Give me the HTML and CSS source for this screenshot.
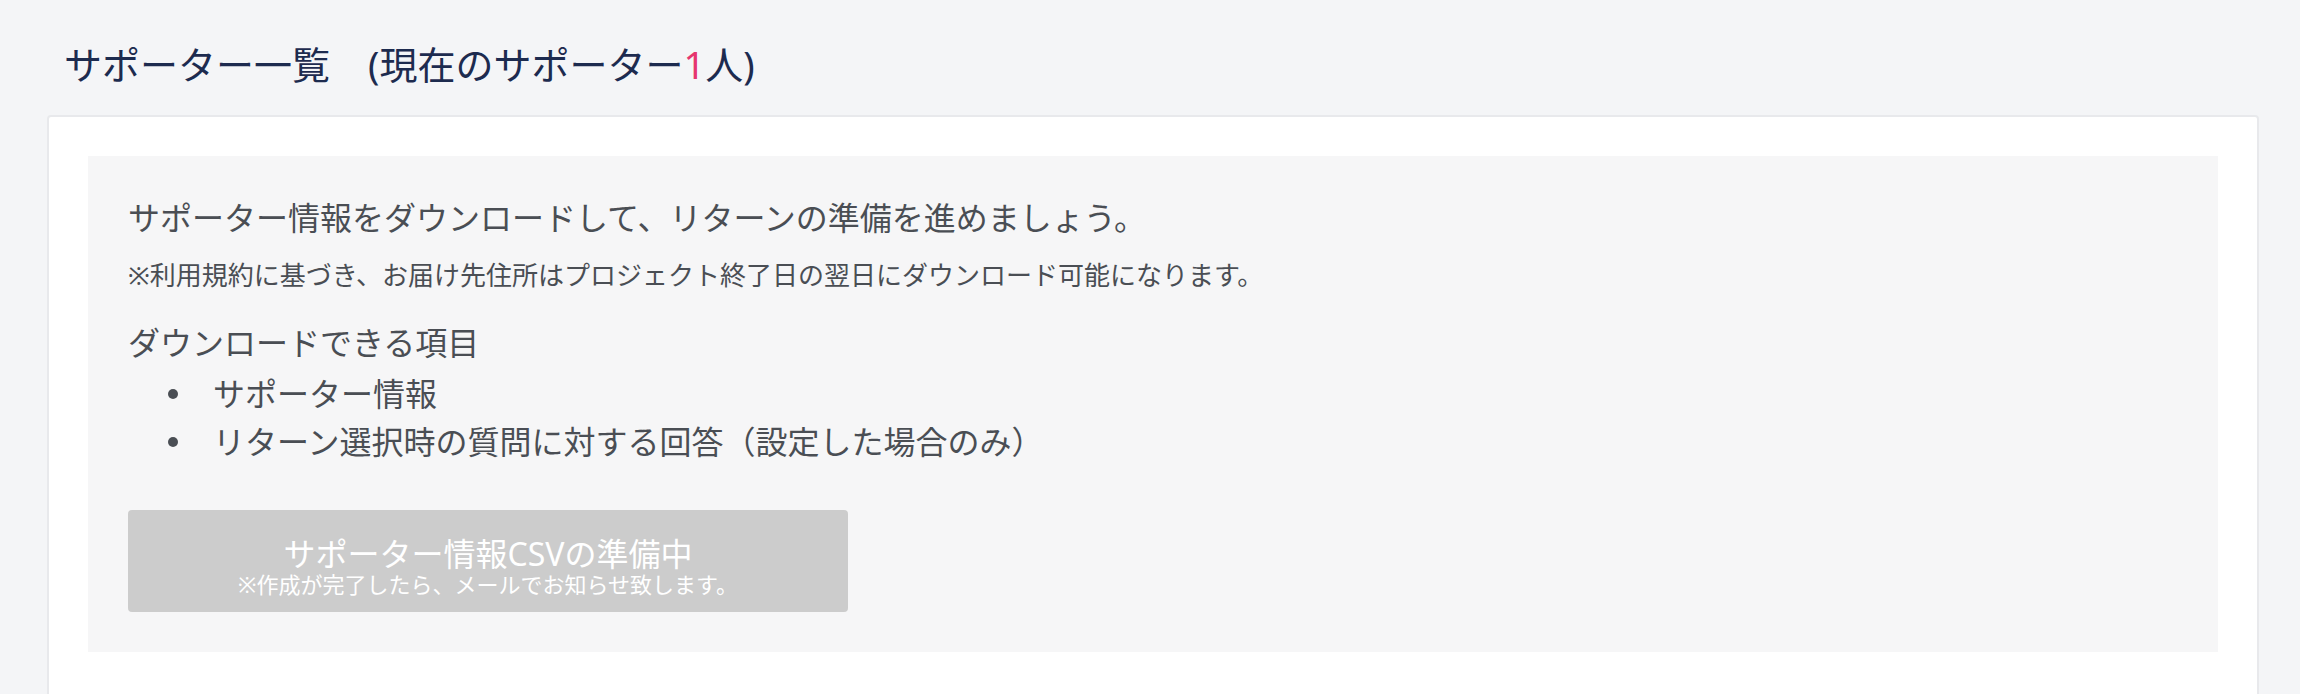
FILE: index.html
```
<!DOCTYPE html>
<html>
<head>
    <title>サポーター一覧</title>
    <link rel="stylesheet" href="styles.css">
</head>
<body>
    <div class="page">
        <h2 class="page-title">サポーター一覧　(現在のサポーター<span class="count">1</span>人)</h2>
        <div class="card">
            <div class="notice">
                <p class="lead">サポーター情報をダウンロードして、リターンの準備を進めましょう。</p>
                <p class="note">※利用規約に基づき、お届け先住所はプロジェクト終了日の翌日にダウンロード可能になります。</p>
                <p class="items-title">ダウンロードできる項目</p>
                <ul class="items">
                    <li>サポーター情報</li>
                    <li>リターン選択時の質問に対する回答（設定した場合のみ）</li>
                </ul>
                <button class="csv-button" disabled>
                    <span class="csv-main">サポーター情報CSVの準備中</span>
                    <span class="csv-sub">※作成が完了したら、メールでお知らせ致します。</span>
                </button>
            </div>
        </div>
    </div>
</body>
</html>
```

FILE: styles.css
```
body {
    margin: 0;
    background: #f4f5f7;
    font-family: "Noto Sans", "Noto Sans CJK JP", sans-serif;
}
.page {
    padding: 40px 41px 0 47px;
}
.page-title {
    margin: 0 0 27px 17px;
    font-size: 38px;
    line-height: 48px;
    font-weight: normal;
    color: #1d2b4f;
}
.count {
    color: #e6356f;
}
.card {
    background: #fff;
    border: 2px solid #e8e9ec;
    border-radius: 4px;
    padding: 39px 39px 80px;
}
.notice {
    background: #f6f6f7;
    padding: 40px;
    color: #4a4e54;
}
.notice p {
    margin: 0;
}
.lead {
    font-size: 32px;
    line-height: 44px;
}
.note {
    margin-top: 16px !important;
    font-size: 26px;
    line-height: 39px;
}
.items-title {
    margin-top: 24px !important;
    font-size: 32px;
    line-height: 48px;
}
.items {
    list-style: none;
    margin: 3px 0 0;
    padding: 0;
}
.items li {
    display: flex;
    align-items: center;
    font-size: 32px;
    line-height: 48px;
    padding-left: 40px;
}
.items li::before {
    content: "";
    width: 10px;
    height: 10px;
    border-radius: 50%;
    background: #4a4e54;
    margin-right: 35px;
    flex-shrink: 0;
}
.csv-button {
    display: flex;
    flex-direction: column;
    align-items: center;
    box-sizing: border-box;
    width: 720px;
    height: 102px;
    margin-top: 44px;
    padding: 26px 0 0;
    border: none;
    border-radius: 4px;
    background: #cccccc;
    color: #fff;
    font-family: inherit;
}
.csv-main {
    font-size: 32px;
    line-height: 36px;
}
.csv-sub {
    font-size: 22px;
    line-height: 24px;
}
```
